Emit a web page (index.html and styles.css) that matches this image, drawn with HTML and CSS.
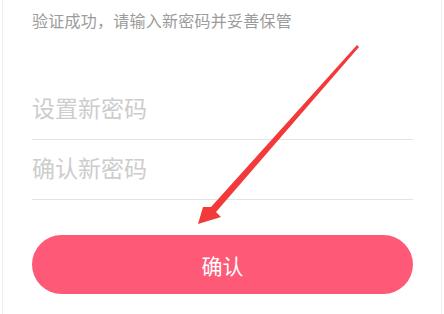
FILE: index.html
```html
<!DOCTYPE html>
<html lang="zh-CN">
<head>
<meta charset="utf-8">
<title>设置新密码</title>
<link rel="stylesheet" href="styles.css">
</head>
<body>
<div class="page">
  <p class="hint">验证成功，请输入新密码并妥善保管</p>
  <div class="field"><input class="pwd" type="password" placeholder="设置新密码"></div>
  <div class="field"><input class="pwd" type="password" placeholder="确认新密码"></div>
  <button class="confirm" type="button">确认</button>
  <svg class="arrow" width="444" height="314" viewBox="0 0 444 314" aria-hidden="true">
    <polygon points="198,224 203,207 211,207 357,45 359,47 216,212 221,217" fill="#f23a3b"/>
  </svg>
</div>
</body>
</html>
```
FILE: styles.css
```css
* { box-sizing: border-box; }
html, body {
  margin: 0;
  padding: 0;
  background: #fff;
}
body {
  font-family: "Noto Sans CJK SC", "Noto Sans", sans-serif;
}
.page {
  position: relative;
  width: 440px;
  height: 314px;
  margin: 0 2px;
  border-left: 1px solid #efefef;
  border-right: 1px solid #efefef;
  padding: 8px 28px 0 29px;
  display: flex;
  flex-direction: column;
}
.hint {
  margin: 0 0 48px;
  font-size: 16px;
  letter-spacing: 0.25px;
  line-height: 24px;
  color: #9b9b9b;
}
.field {
  height: 60px;
  padding-bottom: 6px;
  border-bottom: 1px solid #e4e4e4;
  display: flex;
  align-items: center;
}
.pwd {
  width: 100%;
  border: 0;
  outline: 0;
  padding: 0;
  margin: 0;
  background: transparent;
  font-family: "Noto Sans CJK SC", "Noto Sans", sans-serif;
  font-size: 23px;
  line-height: 30px;
  color: #333;
}
.pwd::placeholder { color: #cdcdcd; }
.confirm {
  margin-top: 35px;
  height: 59px;
  width: 100%;
  border: 0;
  border-radius: 30px;
  background: #fe5a78;
  color: #fff;
  font-family: "Noto Sans CJK SC", "Noto Sans", sans-serif;
  font-size: 21px;
  padding: 0;
}
.arrow {
  position: absolute;
  left: -3px;
  top: 0;
  pointer-events: none;
}
```
